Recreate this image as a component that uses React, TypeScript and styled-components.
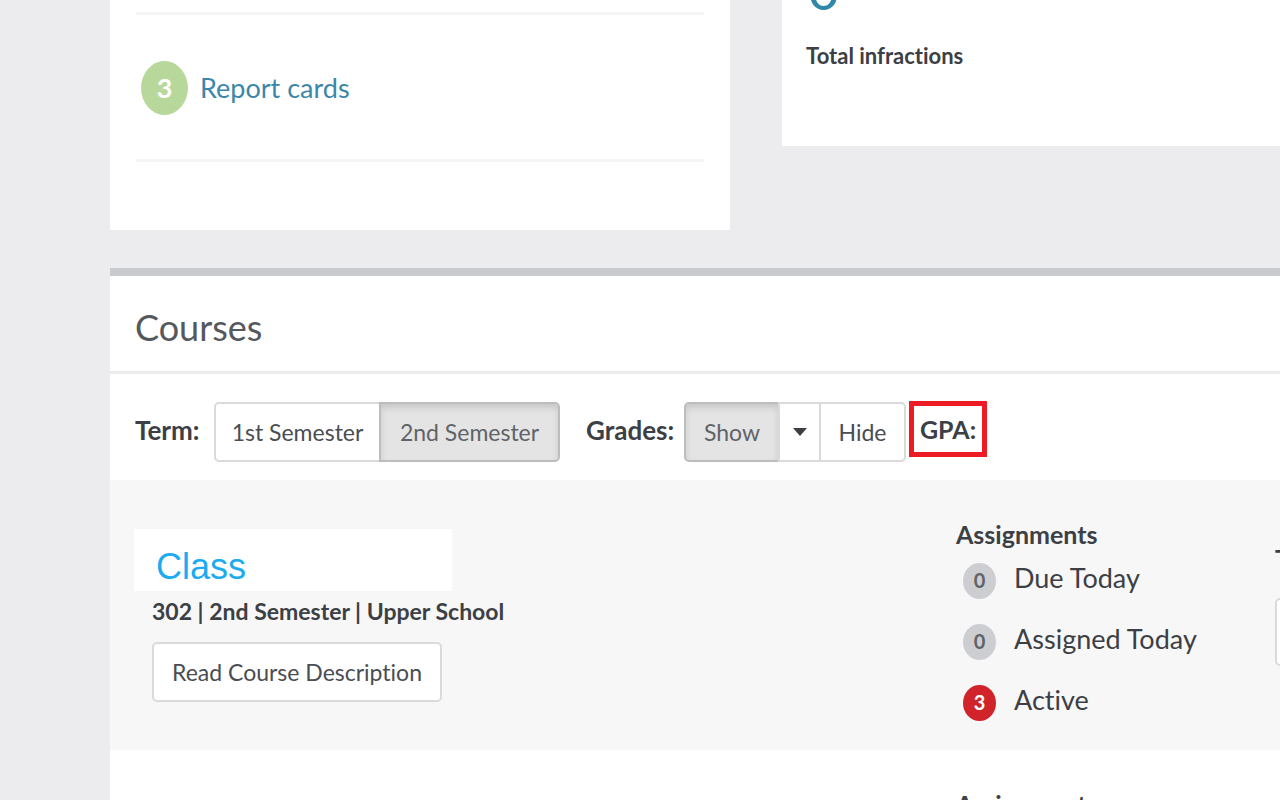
import React from "react";
import styled, { createGlobalStyle } from "styled-components";

const GlobalStyle = createGlobalStyle`
  *, *::before, *::after { box-sizing: border-box; }
  body {
    margin: 0;
    background: #ececee;
    color: #3c4045;
    font-family: Lato, "Open Sans", sans-serif;
    font-size: 27px;
    line-height: 32px;
    font-variant-ligatures: none;
  }
  h2, h3, p, ul { margin: 0; padding: 0; }
  button { font-family: inherit; color: inherit; font-variant-ligatures: none; }
`;

const Page = styled.main`
  height: 100vh;
  overflow: hidden;
  padding-left: 110px;
`;

const Summary = styled.div`
  display: grid;
  grid-template-columns: 53% 1fr;
  column-gap: 52px;
  align-items: start;
  margin-bottom: 38px;
`;

const Card = styled.section`
  background: #fff;
  padding: 0 26px;
`;

const LinkCard = styled(Card)`
  padding-top: 12px;
  padding-bottom: 68px;
`;

const LinkRow = styled.div`
  display: flex;
  align-items: center;
  gap: 12px;
  height: 150px;
  padding: 2px 5px 0;
  border: solid #f4f6f6;
  border-width: 3px 0;
`;

const GreenCount = styled.span`
  display: grid;
  place-items: center;
  width: 47px;
  height: 54px;
  border-radius: 50%;
  background: #b8d89b;
  color: #fff;
  font-weight: 700;
`;

const TextLink = styled.a`
  color: #3c87a8;
  text-decoration: none;
`;

const StatCard = styled(Card)`
  padding: 0 24px 74px;
`;

const StatValue = styled.div`
  display: flex;
  align-items: flex-end;
  height: 20px;
  overflow: hidden;
  margin-bottom: 20px;
  padding-left: 2px;
  color: #2f88a8;
  font-size: 54px;
  line-height: 60px;
`;

const StatLabel = styled.p`
  font-size: 22px;
  font-weight: 700;
`;

const Courses = styled.section`
  border-top: 8px solid #c9cace;
  background: #fff;
`;

const CoursesHeader = styled.header`
  display: flex;
  align-items: center;
  height: 98px;
  padding: 6px 25px 0;
  border-bottom: 3px solid #ececec;
`;

const Title = styled.h2`
  color: #55585d;
  font-size: 36px;
  line-height: 48px;
  font-weight: 400;
`;

const Toolbar = styled.div`
  display: flex;
  align-items: center;
  height: 106px;
  padding: 10px 25px 0;
`;

const ToolLabel = styled.span<{ $width: number }>`
  width: ${(p) => p.$width}px;
  padding-bottom: 4px;
  font-size: 26px;
  font-weight: 700;
  white-space: nowrap;
`;

const Group = styled.div`
  display: flex;
  margin-right: 26px;
`;

const Button = styled.button<{ $width: number; $active?: boolean; $height?: number }>`
  display: grid;
  place-items: center;
  width: ${(p) => p.$width}px;
  height: ${(p) => p.$height ?? 60}px;
  padding: 0;
  border: 2px solid ${(p) => (p.$active ? "#bdbdbd" : "#dadada")};
  background: ${(p) => (p.$active ? "#e4e4e4" : "#fff")};
  box-shadow: ${(p) => (p.$active ? "inset 0 4px 6px rgba(0, 0, 0, 0.12)" : "none")};
  color: ${(p) => (p.$active ? "#606368" : "#4a4d52")};
  font-size: 23px;
  line-height: 28px;
  white-space: nowrap;
`;

const JoinedButton = styled(Button)`
  &:first-child { border-radius: 5px 0 0 5px; }
  &:last-child { border-radius: 0 5px 5px 0; }
  & + & { margin-left: -2px; }
`;

const SingleButton = styled(Button)`
  border-radius: 5px;
`;

const Caret = styled.span`
  border: solid transparent;
  border-width: 8px 7px 0;
  border-top-color: #3c4045;
`;

const Highlight = styled.span`
  display: grid;
  place-items: center;
  width: 78px;
  height: 56px;
  margin: 0 0 6px -23px;
  border: 5px solid #ed1c24;
  font-size: 25px;
  font-weight: 700;
`;

const CourseRow = styled.article<{ $shaded?: boolean }>`
  display: grid;
  grid-template-columns: 846px 319px 140px;
  height: 270px;
  background: ${(p) => (p.$shaded ? "#f7f7f7" : "#fff")};
`;

const CourseInfo = styled.div`
  padding: 49px 0 0 24px;
`;

const CourseName = styled.h3`
  width: 318px;
  height: 62px;
  padding: 18px 22px 0;
  background: #fff;
  color: #1dabf0;
  font: 400 36px/40px "Liberation Sans", sans-serif;
`;

const CourseDetails = styled.div`
  padding: 4px 0 0 18px;
`;

const CourseMeta = styled.p`
  margin-bottom: 15px;
  font-size: 23px;
  font-weight: 700;
`;

const Assignments = styled.div`
  padding-top: 38px;
`;

const ColumnTitle = styled.h3`
  font-size: 25px;
  line-height: 32px;
  font-weight: 700;
`;

const AssignmentList = styled.ul`
  display: grid;
  gap: 25px;
  padding: 13px 7px;
  list-style: none;
`;

const Assignment = styled.li`
  display: flex;
  gap: 18px;
  height: 36px;
  align-items: center;
  white-space: nowrap;
`;

const Count = styled.span<{ $alert?: boolean }>`
  display: grid;
  place-items: center;
  width: 33px;
  height: 36px;
  padding-bottom: 2px;
  border-radius: 50%;
  background: ${(p) => (p.$alert ? "#d1232a" : "#cdced1")};
  color: ${(p) => (p.$alert ? "#fff" : "#606368")};
  font-size: 20px;
  line-height: 24px;
  font-weight: 700;
`;

const AssignmentName = styled.span`
  padding-bottom: 6px;
`;

const Actions = styled.div`
  display: grid;
  align-content: start;
  gap: 24px;
  padding-top: 62px;
`;

const assignments = [
  { name: "Due Today", count: 0 },
  { name: "Assigned Today", count: 0 },
  { name: "Active", count: 3 },
];

export default function App() {
  return (
    <>
      <GlobalStyle />
      <Page>
        <Summary>
          <LinkCard>
            <LinkRow>
              <GreenCount>3</GreenCount>
              <TextLink href="#report-cards">Report cards</TextLink>
            </LinkRow>
          </LinkCard>
          <StatCard>
            <StatValue>0</StatValue>
            <StatLabel>Total infractions</StatLabel>
          </StatCard>
        </Summary>

        <Courses>
          <CoursesHeader>
            <Title>Courses</Title>
          </CoursesHeader>
          <Toolbar>
            <ToolLabel $width={79}>Term:</ToolLabel>
            <Group role="group" aria-label="Term">
              <JoinedButton $width={167}>1st Semester</JoinedButton>
              <JoinedButton $width={181} $active>2nd Semester</JoinedButton>
            </Group>
            <ToolLabel $width={98}>Grades:</ToolLabel>
            <Group role="group" aria-label="Grades">
              <JoinedButton $width={96} $active>Show</JoinedButton>
              <JoinedButton $width={43} aria-label="Grade options"><Caret /></JoinedButton>
              <JoinedButton $width={87}>Hide</JoinedButton>
            </Group>
            <Highlight>GPA:</Highlight>
          </Toolbar>

          <CourseRow $shaded>
            <CourseInfo>
              <CourseName>Class</CourseName>
              <CourseDetails>
                <CourseMeta>302 | 2nd Semester | Upper School</CourseMeta>
                <SingleButton $width={290}>Read Course Description</SingleButton>
              </CourseDetails>
            </CourseInfo>
            <Assignments>
              <ColumnTitle>Assignments</ColumnTitle>
              <AssignmentList>
                {assignments.map((item) => (
                  <Assignment key={item.name}>
                    <Count $alert={item.count > 0}>{item.count}</Count>
                    <AssignmentName>{item.name}</AssignmentName>
                  </Assignment>
                ))}
              </AssignmentList>
            </Assignments>
            <Actions>
              <ColumnTitle>T</ColumnTitle>
              <SingleButton $width={140} $height={68} aria-label="Topics" />
            </Actions>
          </CourseRow>
          <CourseRow>
            <CourseInfo />
            <Assignments>
              <ColumnTitle>Assignments</ColumnTitle>
            </Assignments>
          </CourseRow>
        </Courses>
      </Page>
    </>
  );
}
